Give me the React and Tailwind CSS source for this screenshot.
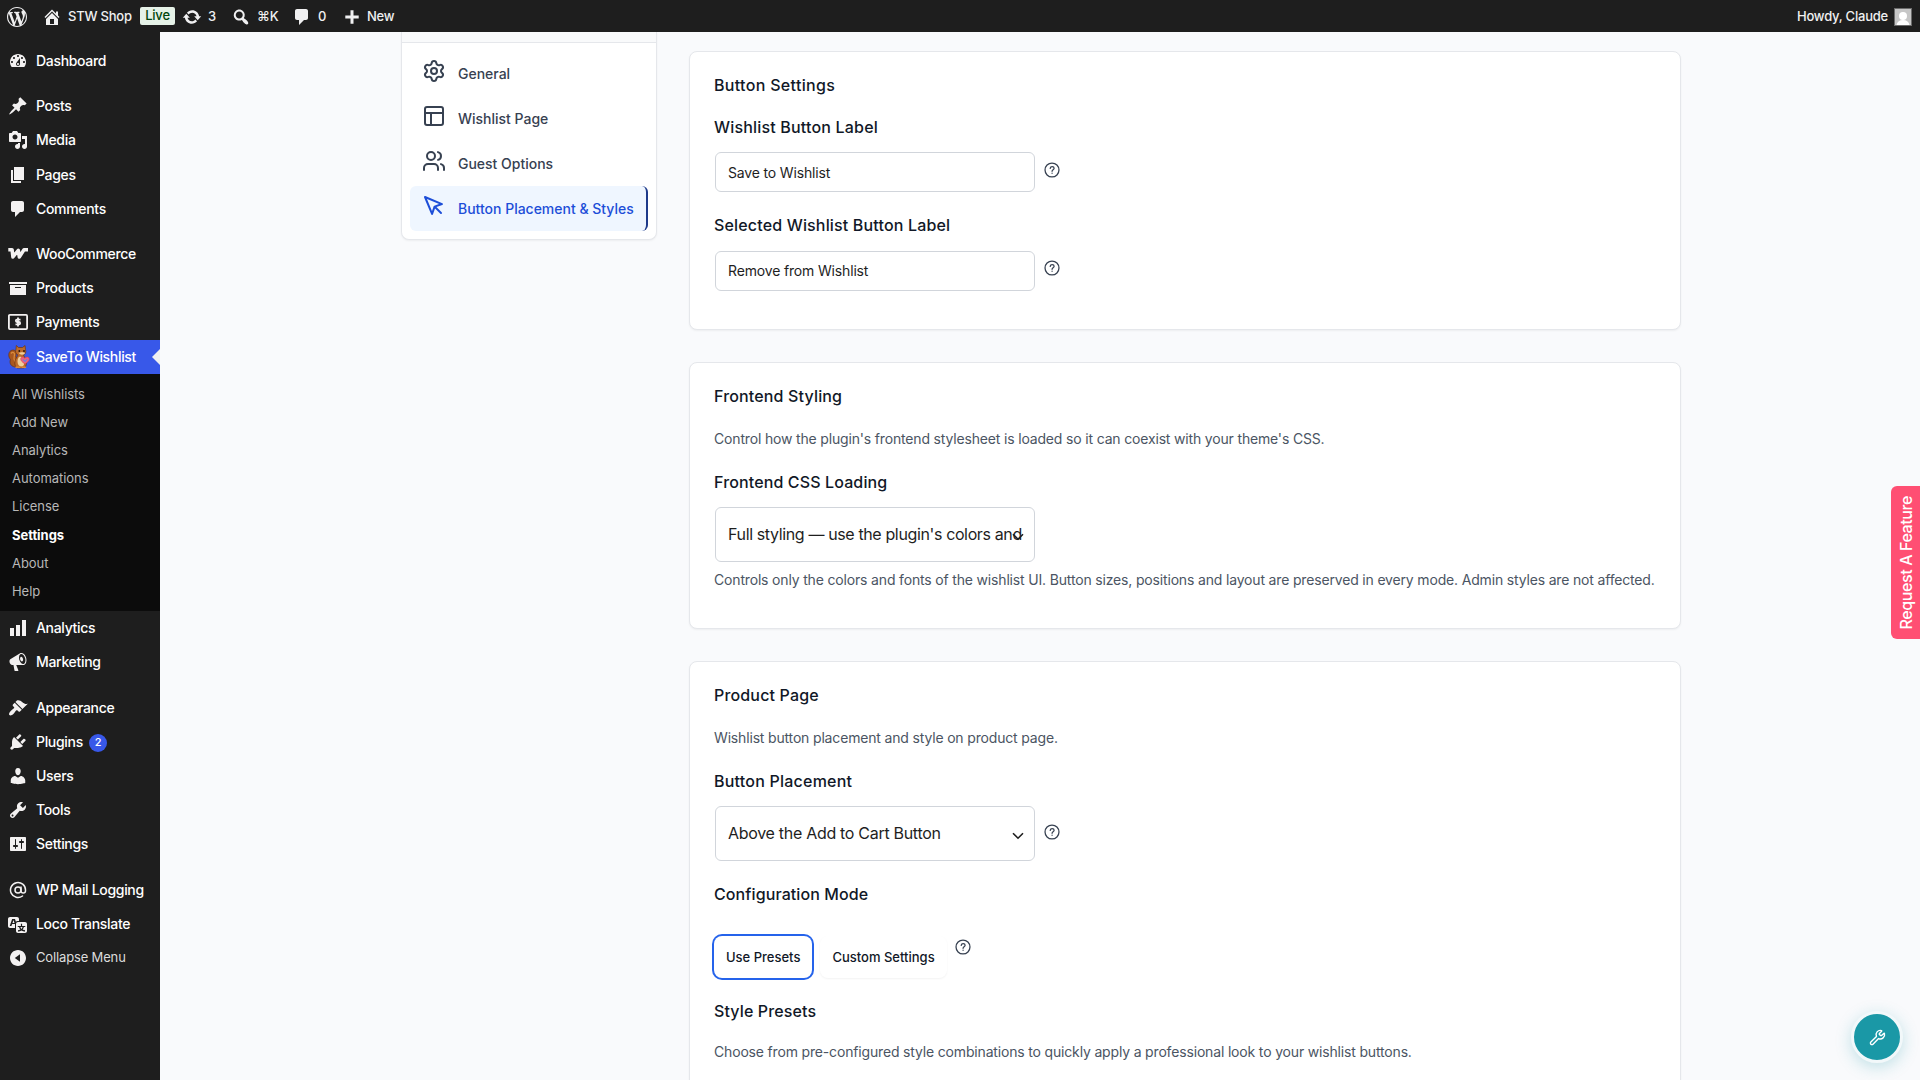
import React, { useState } from 'react';
import { Settings, PanelsTopLeft, Users, Wrench, AtSign } from 'lucide-react';

// Admin menu glyphs, 20x20 grid
const glyphs = {
    wordpress: "M20 10c0-5.51-4.49-10-10-10C4.48 0 0 4.49 0 10c0 5.52 4.48 10 10 10 5.51 0 10-4.48 10-10zM7.78 15.37L4.37 6.22c.55-.02 1.17-.08 1.17-.08.5-.06.44-1.13-.06-1.11 0 0-1.45.11-2.37.11-.18 0-.37 0-.58-.01C4.12 2.69 6.87 1.11 10 1.11c2.33 0 4.45.87 6.05 2.34-.68-.11-1.65.39-1.65 1.58 0 .74.45 1.36.9 2.1.35.61.55 1.36.55 2.46 0 1.49-1.4 5-1.4 5l-3.03-8.37c.54-.02.82-.17.82-.17.5-.05.44-1.25-.06-1.22 0 0-1.44.12-2.38.12-.87 0-2.33-.12-2.33-.12-.5-.03-.56 1.2-.06 1.22l.92.08 1.26 3.41zM17.41 10c.24-.64.74-1.87.43-4.25.7 1.29 1.05 2.71 1.05 4.25 0 3.29-1.73 6.24-4.4 7.78.97-2.59 1.94-5.2 2.92-7.78zM6.1 18.09C3.12 16.65 1.11 13.53 1.11 10c0-1.3.23-2.48.72-3.59C3.25 10.3 4.67 14.2 6.1 18.09zm4.03-6.63l2.58 6.98c-.86.29-1.76.45-2.71.45-.79 0-1.57-.11-2.29-.33.81-2.38 1.62-4.74 2.42-7.1z",
    home: "M16 8.5l1.53 1.53-1.06 1.06L10 4.6l-6.47 6.49-1.06-1.06L10 2.5l4 4v-2h2v4zm-6-2.46l6 5.99V18H4v-5.97zM12 17v-5H8v5h4z",
    update: "M10.2 3.28c3.53 0 6.43 2.61 6.92 6h2.08l-3.5 4-3.5-4h2.32c-.45-1.97-2.21-3.45-4.32-3.45-1.45 0-2.73.71-3.54 1.78L4.95 5.66C6.23 4.2 8.11 3.28 10.2 3.28zm-.4 13.44c-3.52 0-6.43-2.61-6.92-6H.8l3.5-4c1.17 1.33 2.33 2.67 3.5 4H5.48c.45 1.97 2.21 3.45 4.32 3.45 1.45 0 2.73-.71 3.54-1.78l1.71 1.95c-1.28 1.46-3.15 2.38-5.25 2.38z",
    search: "M12.14 4.18c1.87 1.87 2.11 4.75.72 6.89.12.1.22.21.36.31.2.16.47.36.81.59.34.24.56.39.66.47.42.31.73.57.94.78.32.32.6.65.84 1 .25.35.44.69.59 1.04.14.35.21.68.18 1-.02.32-.14.59-.36.81s-.49.34-.81.36c-.31.02-.65-.04-.99-.19-.35-.14-.7-.34-1.04-.59-.35-.24-.68-.52-1-.84-.21-.21-.47-.52-.77-.93-.1-.13-.25-.35-.47-.66-.22-.32-.4-.57-.56-.78-.16-.2-.29-.35-.44-.5-2.07 1.09-4.69.76-6.44-.98-2.14-2.15-2.14-5.64 0-7.78 2.15-2.15 5.63-2.15 7.78 0zm-1.41 6.36c1.36-1.37 1.36-3.58 0-4.95-1.37-1.37-3.59-1.37-4.95 0-1.37 1.37-1.37 3.58 0 4.95 1.36 1.37 3.58 1.37 4.95 0z",
    plus: "M16.7 8.5v3h-5.2v5.2h-3v-5.2H3.3v-3h5.2V3.3h3v5.2z",
    dashboard: "M3.76 16h12.48c1.1-1.37 1.76-3.11 1.76-5 0-4.42-3.58-8-8-8s-8 3.58-8 8c0 1.89.66 3.63 1.76 5zM10 4c.55 0 1 .45 1 1s-.45 1-1 1-1-.45-1-1 .45-1 1-1zM6 6c.55 0 1 .45 1 1s-.45 1-1 1-1-.45-1-1 .45-1 1-1zm8 0c.55 0 1 .45 1 1s-.45 1-1 1-1-.45-1-1 .45-1 1-1zm-5.37 5.55L12 7v6c0 1.1-.9 2-2 2s-2-.9-2-2c0-.57.24-1.08.63-1.45zM4 10c.55 0 1 .45 1 1s-.45 1-1 1-1-.45-1-1 .45-1 1-1zm12 0c.55 0 1 .45 1 1s-.45 1-1 1-1-.45-1-1 .45-1 1-1zm-5 3c0-.55-.45-1-1-1s-1 .45-1 1 .45 1 1 1 1-.45 1-1z",
    post: "M10.44 3.02l1.82-1.82 6.36 6.35-1.83 1.82c-1.05-.68-2.48-.57-3.41.36l-.75.75c-.92.93-1.04 2.35-.35 3.41l-1.83 1.82-2.41-2.41-2.8 2.79c-.42.42-3.38 2.71-3.8 2.29s1.86-3.39 2.28-3.81l2.79-2.79L4.1 9.36l1.83-1.82c1.05.69 2.48.57 3.4-.36l.75-.75c.93-.92 1.05-2.35.36-3.41z",
    media: "M13 11V4c0-.55-.45-1-1-1h-1.67L9 1H5L3.67 3H2c-.55 0-1 .45-1 1v7c0 .55.45 1 1 1h10c.55 0 1-.45 1-1zM7 4.5c1.38 0 2.5 1.12 2.5 2.5S8.38 9.5 7 9.5 4.5 8.38 4.5 7 5.62 4.5 7 4.5zM14 6h5v10.5c0 1.38-1.12 2.5-2.5 2.5S14 17.88 14 16.5s1.12-2.5 2.5-2.5c.17 0 .34.02.5.05V9h-3V6zm-4 8.05V13h2v3.5c0 1.38-1.12 2.5-2.5 2.5S7 17.88 7 16.5 8.12 14 9.5 14c.17 0 .34.02.5.05z",
    page: "M6 15V2h10v13H6zm-1 1h8v2H3V5h2v11z",
    comments: "M5 2h9c1.1 0 2 .9 2 2v7c0 1.1-.9 2-2 2h-2l-5 5v-5H5c-1.1 0-2-.9-2-2V4c0-1.1.9-2 2-2z",
    archive: "M19 4v2H1V4h18zM2 7h16v10H2V7zm11 3V9H7v1h6z",
    chart: "M18 18V2h-4v16h4zm-6 0V7H8v11h4zm-6 0v-8H2v8h4z",
    megaphone: "M18.15 5.94c.46 1.62.38 3.22-.02 4.48-.42 1.28-1.26 2.18-2.3 2.48-.16.06-.26.06-.4.06-.06.02-.12.02-.18.02-.06.02-.14.02-.22.02h-6.8l2.22 5.5c.02.14-.06.26-.14.34-.08.1-.24.16-.34.16H6.95c-.1 0-.26-.06-.34-.16-.08-.08-.16-.2-.14-.34l-1-5.5H4.25l-.02-.02c-.5.06-1.08-.18-1.54-.62s-.88-1.08-1.06-1.88c-.24-.8-.2-1.56-.02-2.2.18-.62.58-1.08 1.06-1.3l.02-.02 9-5.4c.1-.06.18-.1.24-.16.06-.04.14-.08.24-.12.16-.08.28-.12.5-.18 1.04-.3 2.24.1 3.22.98s1.84 2.24 2.26 3.86zm-2.58 5.98h-.02c.4-.1.74-.34 1.04-.7.58-.7.86-1.76.86-3.04 0-.64-.1-1.3-.28-1.98-.34-1.36-1.02-2.5-1.78-3.24s-1.68-1.1-2.46-.88c-.82.22-1.4.96-1.7 2-.32 1.04-.28 2.36.06 3.72.38 1.36 1 2.5 1.8 3.24.78.74 1.62 1.1 2.48.88zm-2.54-7.08c.22-.04.42-.02.62.04.38.16.76.48 1.02 1s.42 1.2.42 1.78c0 .3-.04.56-.12.8-.18.48-.44.84-.86.94-.34.1-.8-.06-1.14-.4s-.64-.86-.78-1.5c-.18-.62-.12-1.24.02-1.72s.48-.84.82-.94z",
    appearance: "M14.48 11.06L7.41 3.99l1.5-1.5c.5-.56 2.3-.47 3.51.32 1.21.8 1.43 1.28 2.91 2.1 1.18.64 2.45 1.26 4.45.85zm-.71.71L6.7 4.7 4.93 6.47c-.39.39-.39 1.02 0 1.41l1.06 1.06c.39.39.39 1.03 0 1.42-.6.6-1.43 1.11-2.21 1.69-.35.26-.7.53-1.01.84C1.43 14.23.4 16.08 1.4 17.07c.99 1 2.84-.03 4.18-1.36.31-.31.58-.66.85-1.02.57-.78 1.08-1.61 1.69-2.21.39-.39 1.02-.39 1.41 0l1.06 1.06c.39.39 1.02.39 1.41 0z",
    plugins: "M13.11 4.36L9.87 7.6 8 5.73l3.24-3.24c.35-.34 1.05-.2 1.56.32.52.51.66 1.21.31 1.55zm-8 1.77l.91-1.12 9.01 9.01-1.19.84c-.71.71-2.63 1.16-3.82 1.16H6.14L4.9 17.26c-.59.59-1.54.59-2.12 0-.59-.58-.59-1.53 0-2.12l1.24-1.24v-3.88c0-1.13.4-3.19 1.09-3.89zm7.26 3.97l3.24-3.24c.34-.35 1.04-.21 1.55.31.52.51.66 1.21.31 1.55l-3.24 3.25z",
    users: "M10 9.25c-2.27 0-2.73-3.44-2.73-3.44C7 4.02 7.82 2 9.97 2c2.16 0 2.98 2.02 2.71 3.81 0 0-.41 3.44-2.68 3.44zm0 2.57L12.72 10c2.39 0 4.52 2.33 4.52 4.53v2.49s-3.65 1.13-7.24 1.13c-3.65 0-7.24-1.13-7.24-1.13v-2.49c0-2.25 1.94-4.48 4.47-4.48z",
    tools: "M16.68 9.77c-1.34 1.34-3.3 1.67-4.95.99l-5.41 6.52c-.99.99-2.59.99-3.58 0s-.99-2.59 0-3.57l6.52-5.42c-.68-1.65-.35-3.61.99-4.95 1.28-1.28 3.12-1.62 4.72-1.06l-2.89 2.89 2.82 2.82 2.86-2.87c.53 1.58.18 3.39-1.08 4.65zM3.81 16.21c.4.39 1.04.39 1.43 0 .4-.4.4-1.04 0-1.43-.39-.4-1.03-.4-1.43 0-.39.39-.39 1.03 0 1.43z",
    settings: "M18 16V4c0-.55-.45-1-1-1H3c-.55 0-1 .45-1 1v12c0 .55.45 1 1 1h14c.55 0 1-.45 1-1zM8 11h1c.55 0 1 .45 1 1s-.45 1-1 1H8v1.5c0 .28-.22.5-.5.5s-.5-.22-.5-.5V13H6c-.55 0-1-.45-1-1s.45-1 1-1h1V5.5c0-.28.22-.5.5-.5s.5.22.5.5V11zm5-2h-1c-.55 0-1-.45-1-1s.45-1 1-1h1V5.5c0-.28.22-.5.5-.5s.5.22.5.5V7h1c.55 0 1 .45 1 1s-.45 1-1 1h-1v5.5c0 .28-.22.5-.5.5s-.5-.22-.5-.5V9z",
    translation: "M11 7H9.49c-.63 0-1.25.3-1.59.7L7 5H4.13l-2.39 7h1.69l.74-2H7v4H2c-1.1 0-2-.9-2-2V5c0-1.1.9-2 2-2h7c1.1 0 2 .9 2 2v2zM6.51 9H4.49l1-2.93zM10 8h7c1.1 0 2 .9 2 2v7c0 1.1-.9 2-2 2h-7c-1.1 0-2-.9-2-2v-7c0-1.1.9-2 2-2zm7.25 5v-1.08h-3.17V9.75h-1.16v2.17H9.75V13h1.28c.11.85.56 1.85 1.28 2.62-.87.36-1.89.62-2.31.62-.01.02.22.97.2 1.46.84 0 2.21-.5 3.28-1.15 1.09.65 2.48 1.15 3.34 1.15-.02-.49.2-1.44.2-1.46-.43 0-1.49-.27-2.38-.63.7-.77 1.14-1.77 1.25-2.61h1.36zm-3.81 1.93c-.5-.46-.85-1.13-1.01-1.93h2.09c-.17.8-.51 1.47-1 1.93l-.04.03s-.03-.02-.04-.03z",
    collapse: "M10 2c4.42 0 8 3.58 8 8s-3.58 8-8 8-8-3.58-8-8 3.58-8 8-8zm2 4.2L6.8 10l5.2 3.8z",
};

const Glyph = ({name, className = ''}) => (
    <svg viewBox="0 0 20 20" fill="currentColor" fillRule="evenodd" className={`size-5 shrink-0 ${className}`}><path d={glyphs[name]} /></svg>
);

const WooIcon = () => (
    <svg viewBox="0 0 20 20" className="size-5 shrink-0" fill="none" stroke="currentColor" strokeWidth="3.500" strokeLinejoin="round">
        <path d="M.3 5.700h3.800l.8 7.300L10.300 6.300l1 6.700L16 5.800h4" />
    </svg>
);

const PaymentsIcon = () => (
    <svg viewBox="0 0 20 20" className="size-5 shrink-0" fill="none" stroke="currentColor" strokeWidth="1.800">
        <rect x=".9" y="2.900" width="18.200" height="14.200" rx="1" />
        <path d="M12.500 7.700H9a1.150 1.150 0 0 0 0 2.300h2a1.150 1.150 0 0 1 0 2.300H7.500M10 5.500v9" />
    </svg>
);

// Plugin mascot: squirrel holding a heart
const Squirrel = () => (
    <svg viewBox="0 0 22 24" className="h-6 w-[22px] shrink-0">
        <path d="M9 22C3 22.500 1 18 2.500 14.500 0.300 12 0 7.500 3 5.500c3.500-1.500 6 1 5.300 4-.3 1.500-.8 2.500.7 4z" fill="#a9581f" stroke="#6e3410" strokeWidth=".7" />
        <path d="M3 8.500c1.500-2 4-1 3.500 1.500-.4 2-1.500 4 .5 6.500" stroke="#d98a3d" strokeWidth="1.300" fill="none" />
        <path d="M8 4l.3-3.500 2.200 2h4L17 .5l.5 4c.8 2.500 0 4.500-2 5.500l2.500 5c1 3 .5 6.500-2 8H9c-2.500-2-2.500-5.500-1.500-8.500L10 10C7.500 8.500 7 6.500 8 4z" fill="#bd6b2a" stroke="#6e3410" strokeWidth=".7" />
        <path d="M11 12c2-1 4 0 5 3 .8 3 0 6-2 6.500-3 0-4.500-2-4.500-5 0-2 .5-3.500 1.500-4.500z" fill="#f0cf9a" />
        <path d="M11 8c1-1 5-1 6 0-.5 2-5 2.500-6 0z" fill="#f0cf9a" />
        <circle cx="11.300" cy="6" r=".9" fill="#2b1508" />
        <circle cx="16" cy="6" r=".9" fill="#2b1508" />
        <path d="M17 19c-3-2-4.500-3.500-4.300-5.300.3-1.900 2.800-2.200 4.100-.5 1.300-1.700 4.200-1.400 4.500.6.200 2-1.800 3.700-4.300 5.200z" fill="#ef5f7e" stroke="#c93a5b" strokeWidth=".5" />
        <path d="M15 14.500l2 2 2.200-2.300" stroke="#6b7de0" strokeWidth="1.100" fill="none" />
        <path d="M8 22.300h4M14 22.300h3.500" stroke="#d98a3d" strokeWidth="1.500" strokeLinecap="round" />
    </svg>
);

const menuTop = [
    [{ icon: 'dashboard', label: 'Dashboard' }],
    [
        { icon: 'post', label: 'Posts' },
        { icon: 'media', label: 'Media' },
        { icon: 'page', label: 'Pages' },
        { icon: 'comments', label: 'Comments' },
    ],
    [
        { node: <WooIcon />, label: 'WooCommerce' },
        { icon: 'archive', label: 'Products' },
        { node: <PaymentsIcon />, label: 'Payments' },
        { node: <Squirrel />, label: 'SaveTo Wishlist', current: true },
    ],
];

const submenu = ['All Wishlists', 'Add New', 'Analytics', 'Automations', 'License', 'Settings', 'About', 'Help'];

const menuBottom = [
    [
        { icon: 'chart', label: 'Analytics' },
        { icon: 'megaphone', label: 'Marketing' },
    ],
    [
        { icon: 'appearance', label: 'Appearance' },
        { icon: 'plugins', label: 'Plugins', count: 2 },
        { icon: 'users', label: 'Users' },
        { icon: 'tools', label: 'Tools' },
        { icon: 'settings', label: 'Settings' },
    ],
    [
        { node: <AtSign size={18} strokeWidth={2} className="mx-px shrink-0" />, label: 'WP Mail Logging' },
        { icon: 'translation', label: 'Loco Translate' },
    ],
];

const MenuItem = ({item, height}) => (
    <a className={`relative flex items-center pl-2 text-sm font-medium tracking-[-0.32px] text-white ${height} ${item.current ? 'bg-[#3858e9]' : ''}`}>
        <span className="flex w-7 items-center text-[#f3f1f1]">{item.icon ? <Glyph name={item.icon} /> : item.node}</span>
        <span>{item.label}</span>
        {item.count && <span className="mt-0.5 ml-1.5 flex size-[18px] items-center justify-center rounded-full bg-[#3858e9] text-[11px]">{item.count}</span>}
        {item.current && <span className="absolute top-[9px] right-0 border-y-8 border-r-8 border-y-transparent border-r-[#f0f0f1]" />}
    </a>
);

const MenuGroups = ({groups, gap, height}) => (
    <div className={`flex flex-col ${gap}`}>
        {groups.map((group, i) => (
            <div key={i}>
                {group.map(item => <MenuItem key={item.label} item={item} height={height} />)}
            </div>
        ))}
    </div>
);

const AdminBar = () => (
    <header className="flex h-8 shrink-0 items-center bg-[#1e1e1e] pt-px text-[13px] font-medium tracking-[-0.22px] text-[#f0f0f1]">
        <Glyph name="wordpress" className="ml-[7px]" />
        <Glyph name="home" className="ml-[15px]" />
        <span className="ml-1.5 w-[72px]">STW Shop</span>
        <span className="-mt-px flex h-[18px] w-[35px] items-center justify-center rounded-xs bg-[#e6f2e8] text-[#00450c]">Live</span>
        <Glyph name="update" className="ml-[7px]" />
        <span className="ml-1.5 w-[23px]">3</span>
        <Glyph name="search" />
        <span className="ml-[6px] w-[35px]">⌘K</span>
        <Glyph name="comments" />
        <span className="ml-1.5 w-6">0</span>
        <Glyph name="plus" />
        <span className="ml-[5px]">New</span>
        <span className="mr-[6px] ml-auto">Howdy, Claude</span>
        <svg viewBox="0 0 18 18" className="mr-2 size-[18px]">
            <rect width="18" height="18" fill="#6b6b6b" />
            <rect x="1" y="1" width="16" height="16" fill="#c6c6c6" />
            <circle cx="9" cy="8" r="4" fill="#fff" />
            <path d="M2.500 17c.8-3.500 3-5 6.500-5s5.700 1.500 6.500 5z" fill="#fff" />
        </svg>
    </header>
);

const Help = () => (
    <svg viewBox="0 0 24 24" className="size-[18px] shrink-0 text-[#374151]" fill="none" stroke="currentColor" strokeWidth="1.700" strokeLinecap="round" strokeLinejoin="round">
        <circle cx="12" cy="12" r="9.300" />
        <path d="M9.600 9.700c.3-1.500 1.400-2.100 2.600-2.100 1.500 0 2.600.9 2.600 2.200 0 1.900-2.700 1.900-2.700 3.900M12.100 16.300v.1" />
    </svg>
);

const Title = ({children, className = 'tracking-[0.16px]'}) => (
    <h3 className={`text-base/6 font-medium text-[#111827] ${className}`}>{children}</h3>
);

const Hint = ({children, className = ''}) => (
    <p className={`text-sm/5 tracking-[-0.168px] whitespace-nowrap text-[#4b5563] ${className}`}>{children}</p>
);

const TextField = ({value, className = 'mt-[13px]', inputClass = '', helpClass = 'mt-[9px]'}) => (
    <div className={`ml-px flex items-start gap-2 ${className}`}>
        <input type="text" defaultValue={value} className={`h-10 w-80 rounded-md border border-[#d1d5db] bg-white px-3 text-sm tracking-[-0.16px] text-[#1e1e1e] ${inputClass}`} />
        <span className={helpClass}><Help /></span>
    </div>
);

const SelectField = ({value, help, textClass = 'tracking-[-0.3px]'}) => (
    <div className="mt-[13px] ml-px flex items-start gap-2">
        <div className="relative flex h-[55px] w-80 items-center rounded-md border border-[#d1d5db] bg-white pb-[2px] pl-3">
            <span className={`text-base whitespace-nowrap text-[#1e1e1e] ${textClass}`}>{value}</span>
            <svg viewBox="0 0 12 8" className="absolute top-[25px] right-[10px] h-2 w-3" fill="none" stroke="#1e1e1e" strokeWidth="1.600">
                <path d="M1 1.200l5 5 5-5" />
            </svg>
        </div>
        {help && <span className="mt-[17px]"><Help /></span>}
    </div>
);

const Card = ({children, className = ''}) => (
    <section className={`rounded-lg border border-[#e5e7eb] bg-white px-6 pt-[21px] shadow-xs ${className}`}>{children}</section>
);

const PointerIcon = () => (
    <svg viewBox="0 0 24 24" className="size-6" fill="none" stroke="currentColor" strokeWidth="2" strokeLinecap="round" strokeLinejoin="round">
        <path d="M3 3l7.070 16.970 2.510-7.390 7.390-2.510L3 3z" />
        <path d="M13 13l6 6" />
    </svg>
);

const tabs = [
    { label: 'General', icon: <Settings size={24} /> },
    { label: 'Wishlist Page', icon: <PanelsTopLeft size={24} /> },
    { label: 'Guest Options', icon: <Users size={24} /> },
    { label: 'Button Placement & Styles', icon: <PointerIcon /> },
];

export default function App(){
    const [tab, setTab] = useState('Button Placement & Styles');
    const [mode, setMode] = useState('Use Presets');

    return (
        <div className="flex h-screen w-screen flex-col overflow-hidden bg-[#f9fafc] font-['Inter','Liberation_Sans',sans-serif]">
            <AdminBar />
            <div className="flex min-h-0 flex-1">
                <nav className="w-40 shrink-0 bg-[#1e1e1e] pt-3">
                    <MenuGroups groups={menuTop} gap="gap-[11px]" height="h-[34.2px]" />
                    <ul className="bg-[#0c0c0c] pt-[6.6px] pb-[5px] text-[13px] tracking-[-0.05px] text-[#b8b8b8]">
                        {submenu.map(label => (
                            <li key={label} className={`flex h-[28.2px] items-center pl-3 ${label === 'Settings' ? 'font-bold text-white' : ''}`}>{label}</li>
                        ))}
                    </ul>
                    <MenuGroups groups={menuBottom} gap="gap-3" height="h-[34px]" />
                    <a className="flex h-[34px] items-center pl-2 text-[13px] tracking-[-0.15px] text-[#dcdcdc]">
                        <Glyph name="collapse" className="mr-2 text-[#f3f1f1]" />
                        Collapse Menu
                    </a>
                </nav>

                <main className="flex flex-1 items-start gap-8 pl-[241px]">
                    <aside className="w-64 shrink-0 rounded-b-lg border border-t-0 border-[#e5e7eb] bg-white shadow-xs">
                        <div className="h-[11px] border-b border-[#e5e7eb] bg-[#f9fafb]" />
                        <div className="p-2">
                            {tabs.map(t => (
                                <button
                                    key={t.label}
                                    onClick={() => setTab(t.label)}
                                    className={`flex h-[45px] w-full items-center gap-3 rounded-md px-3 text-sm font-medium tracking-[-0.01px] ${t.label === tab ? 'border-r-2 border-[#1e3a8a] bg-[#eff6ff] text-[#1d4ed8]' : 'text-[#374151]'}`}
                                >
                                    <span className="pb-[5px]">{t.icon}</span>
                                    <span className="pt-px whitespace-nowrap">{t.label}</span>
                                </button>
                            ))}
                        </div>
                    </aside>

                    <div className="flex w-[992px] flex-col gap-8 pt-[19px]">
                        <Card className="h-[279px]">
                            <Title className="tracking-[0.32px]">Button Settings</Title>
                            <Title className="mt-[18px] tracking-[0.18px]">Wishlist Button Label</Title>
                            <TextField value="Save to Wishlist" />
                            <Title className="mt-[21px] tracking-[0.16px]">Selected Wishlist Button Label</Title>
                            <TextField value="Remove from Wishlist" className="mt-[14px]" inputClass="pb-0.5" helpClass="mt-2" />
                        </Card>

                        <Card className="h-[267px]">
                            <Title>Frontend Styling</Title>
                            <Hint className="mt-[21px]">Control how the plugin's frontend stylesheet is loaded so it can coexist with your theme's CSS.</Hint>
                            <Title className="mt-[21px] tracking-[0.13px]">Frontend CSS Loading</Title>
                            <SelectField value="Full styling — use the plugin's colors and" textClass="tracking-[-0.37px]" />
                            <Hint className="mt-2">Controls only the colors and fonts of the wishlist UI. Button sizes, positions and layout are preserved in every mode. Admin styles are not affected.</Hint>
                        </Card>

                        <Card className="h-[600px]">
                            <Title>Product Page</Title>
                            <Hint className="mt-[21px]">Wishlist button placement and style on product page.</Hint>
                            <Title className="mt-[21px] tracking-[0.22px]">Button Placement</Title>
                            <SelectField value="Above the Add to Cart Button" help />
                            <Title className="mt-[21px] tracking-[0.1px]">Configuration Mode</Title>
                            <div className="mt-[30px] flex items-start gap-2">
                                {['Use Presets', 'Custom Settings'].map(label => (
                                    <button
                                        key={label}
                                        onClick={() => setMode(label)}
                                        className={`h-[42px] rounded-lg bg-white px-3 pt-0.5 text-[13px] font-medium text-[#111827] ${label === mode ? 'ring-2 ring-[#2563eb]' : 'shadow-xs'}`}
                                    >
                                        {label}
                                    </button>
                                ))}
                                <span className="mt-0.5 -ml-px"><Help /></span>
                            </div>
                            <Title className="mt-[21px] tracking-[0.13px]">Style Presets</Title>
                            <Hint className="mt-[19px]">Choose from pre-configured style combinations to quickly apply a professional look to your wishlist buttons.</Hint>
                        </Card>
                    </div>
                </main>
            </div>

            {/* floating widgets */}
            <button className="absolute top-[486px] right-0 flex h-[153px] w-[29px] items-center justify-center rounded-l-md bg-[#ff4f73] text-white">
                <span className="rotate-180 text-base font-medium tracking-[-0.4px] whitespace-nowrap [writing-mode:vertical-rl]">Request A Feature</span>
            </button>
            <button className="absolute right-[17px] bottom-[17px] flex size-[52px] items-center justify-center rounded-full border-3 border-[#f2f8fa] bg-[#1a98a6] text-white shadow-[0_4px_16px_rgba(26,152,166,0.25)]">
                <Wrench size={17} strokeWidth={2} />
            </button>
        </div>
    )
}
